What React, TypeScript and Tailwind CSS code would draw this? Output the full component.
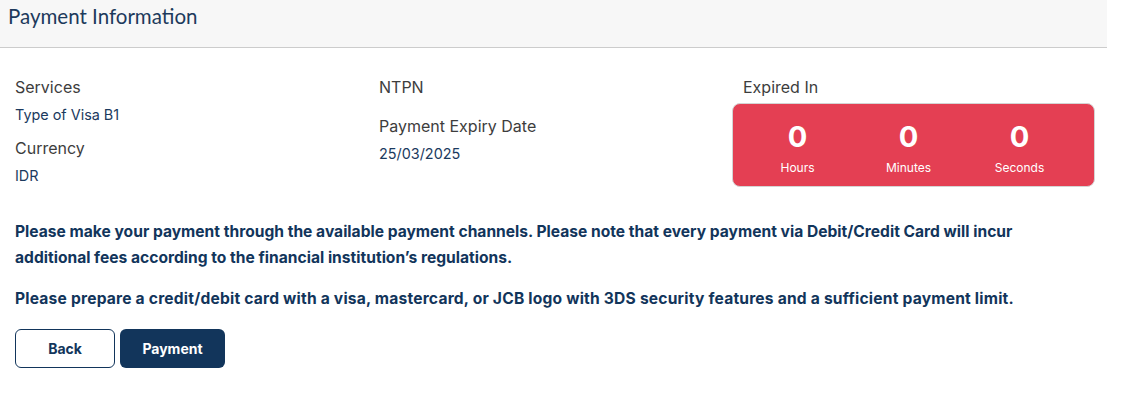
const units = [
  { value: 0, label: 'Hours' },
  { value: 0, label: 'Minutes' },
  { value: 0, label: 'Seconds' },
];

function Field({ label, value, className = '' }: { label: string; value?: string; className?: string }) {
  return (
    <div className={className}>
      <p className="text-[16px] leading-6 text-[#3d3d3d]">{label}</p>
      {value && <p className="mt-[6px] text-[14.4px] leading-5 text-[#1b3a5e]">{value}</p>}
    </div>
  );
}

export default function App() {
  return (
    <div className="min-h-[400px] bg-white font-['Inter',sans-serif]">
      {/* Header */}
      <div className="w-[1107px] h-[48px] bg-[#f7f7f7] border-b border-[#cccccc] px-2 pt-[4px]">
        <h1 className="font-['Lato',sans-serif] text-[20.5px] leading-6 text-[#1d3a5c]">Payment Information</h1>
      </div>

      <div className="px-[15px] pt-[27px]">
        <div className="grid grid-cols-[364px_353px_363px]">
          <div>
            <Field label="Services" value="Type of Visa B1" />
            <Field label="Currency" value="IDR" className="mt-[11px]" />
          </div>
          <div>
            <Field label="NTPN" />
            <Field label="Payment Expiry Date" value="25/03/2025" className="mt-[15px]" />
          </div>
          <div>
            <p className="pl-[11px] text-[16px] leading-6 text-[#3d3d3d]">Expired In</p>
            <div className="mt-1 h-[84px] rounded-lg border border-[#d4d4d4] bg-[#e43f53] flex items-center justify-center pr-[10px] pt-[5px]">
              {units.map((u) => (
                <div key={u.label} className="w-[111px] flex flex-col items-center text-white">
                  <span className="text-[29px] leading-9 font-bold">{u.value}</span>
                  <span className="mt-[5px] text-[12px] leading-4">{u.label}</span>
                </div>
              ))}
            </div>
          </div>
        </div>

        <div className="mt-[32px] text-[15.6px] font-bold leading-[26px] text-[#12355b]">
          <p>
            Please make your payment through the available payment channels. Please note that every payment via
            Debit/Credit Card will incur
            <br />
            additional fees according to the financial institution’s regulations.
          </p>
          <p className="mt-[15px] tracking-[0.2px]">
            Please prepare a credit/debit card with a visa, mastercard, or JCB logo with 3DS security features and a
            sufficient payment limit.
          </p>
        </div>

        <div className="mt-[17px] flex gap-[5px]">
          <button className="w-[100px] h-[39px] rounded-md border border-[#12355b] bg-white text-[14px] font-bold text-[#12355b]">
            Back
          </button>
          <button className="w-[105px] h-[39px] rounded-md bg-[#12355b] text-[14px] font-bold text-white">
            Payment
          </button>
        </div>
      </div>
    </div>
  );
}
